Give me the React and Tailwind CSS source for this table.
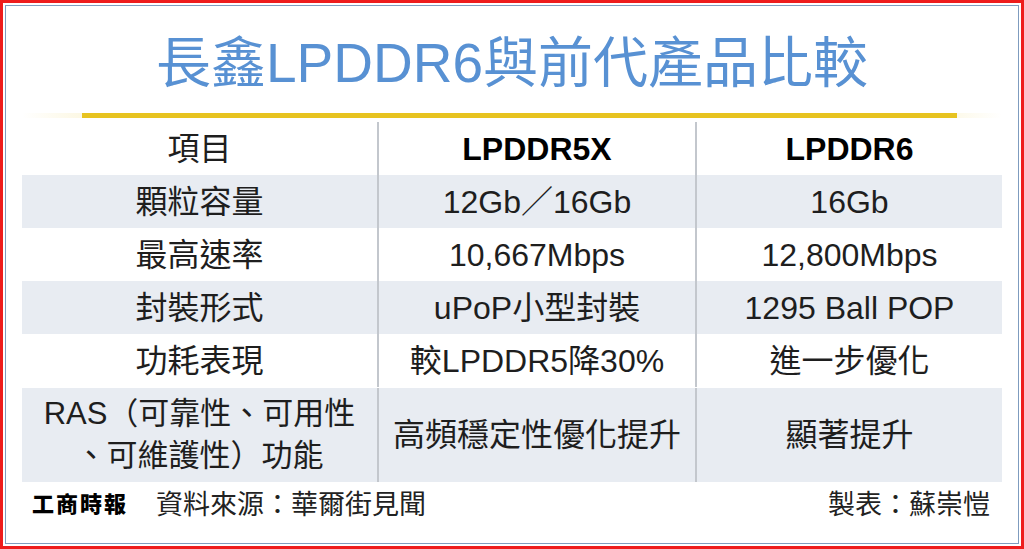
import React from 'react';

const rows = [
    { item: '顆粒容量', old: '12Gb／16Gb', next: '16Gb', shade: true },
    { item: '最高速率', old: '10,667Mbps', next: '12,800Mbps', shade: false },
    { item: '封裝形式', old: 'uPoP小型封裝', next: '1295 Ball POP', shade: true },
    { item: '功耗表現', old: '較LPDDR5降30%', next: '進一步優化', shade: false },
];

const Row = ({ cells, shade, height = 'h-[53px]' }) => (
    <div className={`grid grid-cols-[355px_318px_307px] ${height} ${shade ? 'bg-[#e8ecf2]' : ''}`}>
        {cells.map((c, i) => (
            <div
                key={i}
                className={`flex items-center justify-center text-center ${i > 0 ? 'border-l-2 border-[#c3c7cd]' : ''}`}
            >
                {c}
            </div>
        ))}
    </div>
);

export default function App() {
    return (
        <div className="w-[1024px] h-[549px] bg-white border-[3px] border-[#ee1c1c] p-[2px] font-['Liberation_Sans','Noto_Sans_CJK_TC',sans-serif]">
            <div className="h-full border border-[#7f9cbf] flex flex-col">
                {/* Title */}
                <div className="h-[107px] pt-[7px] flex items-center justify-center">
                    <h1 className="text-[55px] leading-none font-normal text-[#5891d3] whitespace-nowrap">
                        長鑫LPDDR6與前代產品比較
                    </h1>
                </div>

                {/* Gold rule */}
                <div className="mx-4 h-[5px] bg-gradient-to-r from-transparent via-[#e7c320] to-transparent">
                    <div className="h-full ml-[60px] mr-[45px] bg-[#e7c320]" />
                </div>

                {/* Table */}
                <div className="mx-4 mt-[4px] text-[32px] leading-none text-[#1e1e1e]">
                    <Row
                        cells={[
                            <span>項目</span>,
                            <span className="font-bold text-black">LPDDR5X</span>,
                            <span className="font-bold text-black">LPDDR6</span>,
                        ]}
                    />
                    {rows.map((r) => (
                        <Row key={r.item} shade={r.shade} cells={[r.item, r.old, r.next]} />
                    ))}
                    <div className="h-px" />
                    <Row
                        shade
                        height="h-[94px]"
                        cells={[
                            <span className="text-[31px] leading-[42px] whitespace-nowrap">
                                RAS（可靠性、可用性
                                <br />
                                、可維護性）功能
                            </span>,
                            '高頻穩定性優化提升',
                            '顯著提升',
                        ]}
                    />
                </div>

                {/* Footer */}
                <div className="flex-1 flex items-start justify-between pt-[5px] pl-[26px] pr-[28px] text-[27px] leading-[36px] text-[#222]">
                    <div className="flex items-center">
                        <span className="text-[22px] font-black tracking-[2px] text-black mr-[28px]">工商時報</span>
                        <span>資料來源：華爾街見聞</span>
                    </div>
                    <span>製表：蘇崇愷</span>
                </div>
            </div>
        </div>
    );
}
